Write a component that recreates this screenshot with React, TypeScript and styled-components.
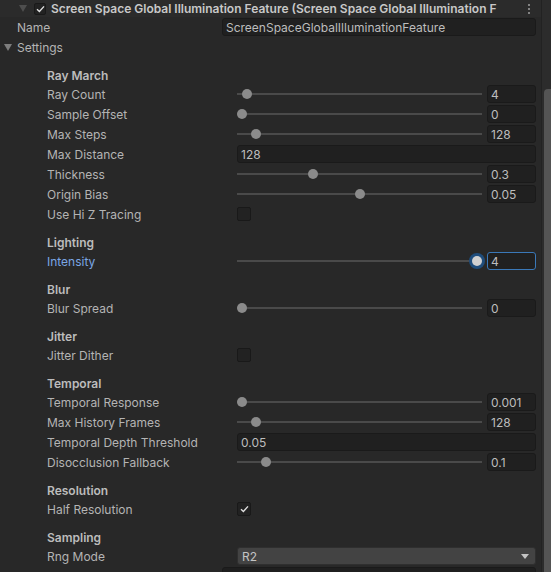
import styled, { createGlobalStyle, css } from "styled-components";

const GlobalStyle = createGlobalStyle`
  html, body {
    margin: 0;
    padding: 0;
    background: #282828;
    font-family: Inter, "Noto Sans", sans-serif;
    font-size: 12px;
    color: #c4c4c4;
    overflow: hidden;
  }
`;

const Panel = styled.div`
  display: flex;
  width: 551px;
  height: 572px;
  overflow: hidden;
  background: #282828;
`;

const Content = styled.div`
  flex: 1;
  min-width: 0;
`;

const ScrollStrip = styled.div`
  width: 10px;
  flex-shrink: 0;
  border-left: 1px solid #222222;
  background: #2c2c2c;
  display: flex;
  flex-direction: column;
  padding-top: 89px;
  box-sizing: border-box;
`;

const ScrollThumb = styled.div`
  margin-left: 2px;
  flex: 1;
  background: #545454;
  border-radius: 4px 0 0 0;
`;

const Header = styled.div`
  height: 17px;
  display: flex;
  align-items: center;
  padding-left: 19px;
  padding-right: 10px;
  background: #2b2b2b;
`;

const Caret = styled.span<{ $dim?: boolean }>`
  width: 0;
  height: 0;
  border-left: 4px solid transparent;
  border-right: 4px solid transparent;
  border-top: 7px solid ${(p) => (p.$dim ? "#4e4e4e" : "#7d7d7d")};
  flex-shrink: 0;
`;

const Check = styled.span<{ $size: number }>`
  width: ${(p) => p.$size}px;
  height: ${(p) => p.$size}px;
  box-sizing: border-box;
  border: 1px solid #191919;
  border-radius: 2px;
  background: #222222;
  display: flex;
  align-items: center;
  justify-content: center;
  flex-shrink: 0;
`;

const Title = styled.div`
  margin-left: 5px;
  font-weight: 600;
  color: #c8c8c8;
  white-space: nowrap;
`;

const Kebab = styled.div`
  margin-left: auto;
  display: flex;
  flex-direction: column;
  gap: 2px;
  padding-right: 1px;
  span {
    width: 2px;
    height: 2px;
    background: #a0a0a0;
    border-radius: 1px;
  }
`;

const Row = styled.div<{ $indent: number; $controlX: number }>`
  height: 20px;
  display: grid;
  grid-template-columns: ${(p) => p.$controlX - p.$indent}px 1fr;
  align-items: center;
  padding-left: ${(p) => p.$indent}px;
  padding-right: 5px;
`;

const Label = styled.div<{ $focus?: boolean }>`
  color: ${(p) => (p.$focus ? "#7aa6e4" : "#b4b4b4")};
  white-space: nowrap;
  overflow: hidden;
`;

const FoldRow = styled.div`
  height: 20px;
  display: flex;
  align-items: center;
  gap: 5px;
  padding-left: 4px;
  color: #b4b4b4;
`;

const SectionTitle = styled.div`
  height: 18px;
  margin-top: 9px;
  padding-left: 47px;
  display: flex;
  align-items: center;
  font-weight: 600;
  color: #bcbcbc;
`;

const Field = styled.div<{ $focus?: boolean; $width?: number }>`
  height: 18px;
  box-sizing: border-box;
  border-radius: 3px;
  background: #202020;
  border: 1px solid ${(p) => (p.$focus ? "#3a78b8" : "#1a1a1a")};
  display: flex;
  align-items: center;
  padding-left: 3px;
  color: #bdbdbd;
  white-space: nowrap;
  overflow: hidden;
  ${(p) =>
    p.$width
      ? css`
          width: ${p.$width}px;
          flex-shrink: 0;
        `
      : css`
          flex: 1;
        `}
`;

const SliderBox = styled.div`
  display: flex;
  align-items: center;
  gap: 5px;
`;

const Track = styled.div`
  flex: 1;
  height: 18px;
  position: relative;
  &::before {
    content: "";
    position: absolute;
    left: 0;
    right: 0;
    top: 8px;
    height: 2px;
    background: #4a4a4a;
  }
`;

const Thumb = styled.div<{ $focus?: boolean }>`
  position: absolute;
  top: 4px;
  width: 10px;
  height: 10px;
  margin-left: -5px;
  border-radius: 50%;
  background: ${(p) => (p.$focus ? "#d0d0d0" : "#8b8b8b")};
  ${(p) =>
    p.$focus &&
    css`
      box-shadow: 0 0 0 3px #1f4d7c;
    `}
`;

const Dropdown = styled.div<{ $dark?: boolean }>`
  height: 18px;
  box-sizing: border-box;
  border-radius: 3px;
  background: ${(p) => (p.$dark ? "#1f1f1f" : "#434343")};
  border: 1px solid ${(p) => (p.$dark ? "#1a1a1a" : "#2f2f2f")};
  display: flex;
  align-items: center;
  justify-content: space-between;
  padding: 0 6px 0 4px;
  color: #c4c4c4;
`;

const DropArrow = styled.span`
  width: 0;
  height: 0;
  border-left: 4px solid transparent;
  border-right: 4px solid transparent;
  border-top: 5px solid #c4c4c4;
`;

type Item =
  | { kind: "slider"; label: string; value: string; t: number; focus?: boolean }
  | { kind: "field"; label: string; value: string }
  | { kind: "toggle"; label: string; on: boolean }
  | { kind: "dropdown"; label: string; value: string };

const sections: { title: string; items: Item[] }[] = [
  {
    title: "Ray March",
    items: [
      { kind: "slider", label: "Ray Count", value: "4", t: 0.02 },
      { kind: "slider", label: "Sample Offset", value: "0", t: 0 },
      { kind: "slider", label: "Max Steps", value: "128", t: 0.06 },
      { kind: "field", label: "Max Distance", value: "128" },
      { kind: "slider", label: "Thickness", value: "0.3", t: 0.3 },
      { kind: "slider", label: "Origin Bias", value: "0.05", t: 0.5 },
      { kind: "toggle", label: "Use Hi Z Tracing", on: false },
    ],
  },
  {
    title: "Lighting",
    items: [{ kind: "slider", label: "Intensity", value: "4", t: 1, focus: true }],
  },
  {
    title: "Blur",
    items: [{ kind: "slider", label: "Blur Spread", value: "0", t: 0 }],
  },
  {
    title: "Jitter",
    items: [{ kind: "toggle", label: "Jitter Dither", on: false }],
  },
  {
    title: "Temporal",
    items: [
      { kind: "slider", label: "Temporal Response", value: "0.001", t: 0 },
      { kind: "slider", label: "Max History Frames", value: "128", t: 0.06 },
      { kind: "field", label: "Temporal Depth Threshold", value: "0.05" },
      { kind: "slider", label: "Disocclusion Fallback", value: "0.1", t: 0.1 },
    ],
  },
  {
    title: "Resolution",
    items: [{ kind: "toggle", label: "Half Resolution", on: true }],
  },
  {
    title: "Sampling",
    items: [{ kind: "dropdown", label: "Rng Mode", value: "R2" }],
  },
];

const Tick = () => (
  <svg width="9" height="8" viewBox="0 0 9 8">
    <path d="M1 4.2 L3.4 6.4 L8 1.4" fill="none" stroke="#e0e0e0" strokeWidth="1.4" />
  </svg>
);

const Control = ({ item }: { item: Item }) => {
  switch (item.kind) {
    case "slider":
      return (
        <SliderBox>
          <Track>
            <Thumb
              $focus={item.focus}
              style={{ left: `calc(5px + (100% - 10px) * ${item.t})` }}
            />
          </Track>
          <Field $width={49} $focus={item.focus}>
            {item.value}
          </Field>
        </SliderBox>
      );
    case "field":
      return <Field>{item.value}</Field>;
    case "toggle":
      return <Check $size={14}>{item.on && <Tick />}</Check>;
    case "dropdown":
      return (
        <Dropdown>
          {item.value}
          <DropArrow />
        </Dropdown>
      );
  }
};

export default function App() {
  return (
    <>
      <GlobalStyle />
      <Panel>
        <Content>
          <Header>
            <Caret $dim />
            <span style={{ width: 7 }} />
            <Check $size={12}>
              <Tick />
            </Check>
            <Title>
              Screen Space Global Illumination Feature (Screen Space Global
              Illumination F
            </Title>
            <Kebab>
              <span />
              <span />
              <span />
            </Kebab>
          </Header>
          <Row $indent={17} $controlX={222}>
            <Label>Name</Label>
            <Field>ScreenSpaceGlobalIlluminationFeature</Field>
          </Row>
          <FoldRow>
            <Caret />
            Settings
          </FoldRow>
          {sections.map((s) => (
            <div key={s.title}>
              <SectionTitle>{s.title}</SectionTitle>
              {s.items.map((it) => (
                <Row key={it.label} $indent={47} $controlX={237}>
                  <Label $focus={it.kind === "slider" && it.focus}>
                    {it.label}
                  </Label>
                  <Control item={it} />
                </Row>
              ))}
            </div>
          ))}
          <Row $indent={17} $controlX={222}>
            <Label />
            <Dropdown $dark>
              <span />
              <DropArrow />
            </Dropdown>
          </Row>
        </Content>
        <ScrollStrip>
          <ScrollThumb />
        </ScrollStrip>
      </Panel>
    </>
  );
}
